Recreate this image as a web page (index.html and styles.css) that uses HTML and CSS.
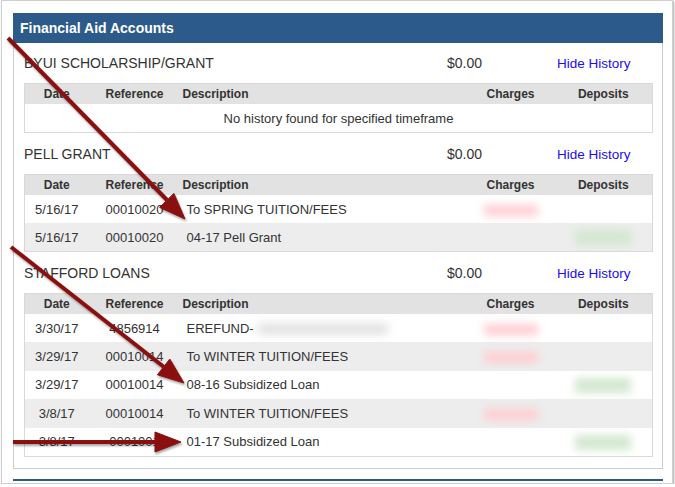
FILE: index.html
```html
<!DOCTYPE html>
<html lang="en">
<head>
  <meta charset="UTF-8">
  <title>Financial Aid Accounts</title>
  <link rel="stylesheet" href="styles.css">
</head>
<body>
  <div class="frame">
    <div class="panel">
      <div class="panel-head">Financial Aid Accounts</div>
      <div class="panel-body">

        <div class="acct">
          <span class="acct-name">BYUI SCHOLARSHIP/GRANT</span>
          <span class="acct-amt">$0.00</span>
          <a class="acct-link" href="#">Hide History</a>
        </div>
        <table class="hist">
          <colgroup>
            <col class="c-date"><col class="c-ref"><col class="c-desc"><col class="c-chg"><col class="c-dep">
          </colgroup>
          <tr><th>Date</th><th>Reference</th><th class="left">Description</th><th>Charges</th><th>Deposits</th></tr>
          <tr><td colspan="5">No history found for specified timeframe</td></tr>
        </table>

        <div class="acct">
          <span class="acct-name">PELL GRANT</span>
          <span class="acct-amt">$0.00</span>
          <a class="acct-link" href="#">Hide History</a>
        </div>
        <table class="hist">
          <colgroup>
            <col class="c-date"><col class="c-ref"><col class="c-desc"><col class="c-chg"><col class="c-dep">
          </colgroup>
          <tr><th>Date</th><th>Reference</th><th class="left">Description</th><th>Charges</th><th>Deposits</th></tr>
          <tr><td>5/16/17</td><td>00010020</td><td class="desc">To SPRING TUITION/FEES</td><td><span class="blob red"></span></td><td></td></tr>
          <tr class="alt"><td>5/16/17</td><td>00010020</td><td class="desc">04-17 Pell Grant</td><td></td><td><span class="blob green"></span></td></tr>
        </table>

        <div class="acct">
          <span class="acct-name">STAFFORD LOANS</span>
          <span class="acct-amt">$0.00</span>
          <a class="acct-link" href="#">Hide History</a>
        </div>
        <table class="hist last">
          <colgroup>
            <col class="c-date"><col class="c-ref"><col class="c-desc"><col class="c-chg"><col class="c-dep">
          </colgroup>
          <tr><th>Date</th><th>Reference</th><th class="left">Description</th><th>Charges</th><th>Deposits</th></tr>
          <tr><td>3/30/17</td><td>4856914</td><td class="desc">EREFUND-<span class="blob grey"></span></td><td><span class="blob red"></span></td><td></td></tr>
          <tr class="alt"><td>3/29/17</td><td>00010014</td><td class="desc">To WINTER TUITION/FEES</td><td><span class="blob red"></span></td><td></td></tr>
          <tr><td>3/29/17</td><td>00010014</td><td class="desc">08-16 Subsidized Loan</td><td></td><td><span class="blob green"></span></td></tr>
          <tr class="alt"><td>3/8/17</td><td>00010014</td><td class="desc">To WINTER TUITION/FEES</td><td><span class="blob red"></span></td><td></td></tr>
          <tr><td>3/8/17</td><td>0001001</td><td class="desc">01-17 Subsidized Loan</td><td></td><td><span class="blob green"></span></td></tr>
        </table>

      </div>
    </div>
    <div class="rule"></div>

    <!-- annotation arrows drawn over the screenshot -->
    <svg class="arrows" width="675" height="487" viewBox="0 0 675 487">
      <g fill="#8a1010" stroke="#8a1010">
        <line x1="8" y1="38" x2="167" y2="200" stroke-width="4"/>
        <polygon points="185,219 159.6,207.4 173.9,193.4" stroke-width="1"/>
        <line x1="11" y1="247" x2="164" y2="367" stroke-width="4"/>
        <polygon points="184,383 157.4,374.8 169.8,359" stroke-width="1"/>
        <line x1="13" y1="442" x2="156" y2="442" stroke-width="4"/>
        <polygon points="181,442 155,432 155,452" stroke-width="1"/>
      </g>
    </svg>
  </div>
</body>
</html>
```

FILE: styles.css
```css
/* Page */
body {
  margin: 0;
  background-color: #fff;
  font-family: "Liberation Sans", Arial, sans-serif;
  color: #333;
}

/* Screenshot frame */
.frame {
  position: relative;
  box-sizing: border-box;
  width: 672px;
  height: 484px;
  margin-left: 1px;
  padding: 12px 0 0 11px;
  border: 1px solid #cfcfcf;
  box-shadow: 1px 1px 2px rgba(0, 0, 0, 0.35);
  background-color: #fff;
}

/* Panel */
.panel {
  width: 650px;
}

.panel-head {
  height: 30px;
  line-height: 30px;
  padding-left: 7px;
  background-color: #2c5a8b;
  color: #fff;
  font-size: 14px;
  font-weight: bold;
}

.panel-body {
  border: 1px solid #cccccc;
  border-top: none;
  padding: 0 10px 11px;
}

.rule {
  width: 650px;
  height: 2px;
  margin-top: 10px;
  background-color: #2c5a8b;
}

/* Account rows */
.acct {
  display: grid;
  grid-template-columns: 423px 110px 95px;
  align-items: center;
  height: 40px;
  font-size: 14px;
}

.acct-link {
  color: #1d0cf2;
  text-decoration: none;
  font-size: 13.5px;
}

/* History tables */
.hist {
  width: 628px;
  margin-bottom: 1px;
  table-layout: fixed;
  border-collapse: collapse;
  border: 1px solid #d9d9d9;
  font-size: 13px;
}

.hist.last {
  margin-bottom: 0;
}

.c-date { width: 64px; }
.c-ref { width: 92px; }
.c-desc { width: 286px; }
.c-chg { width: 88px; }
.c-dep { width: 98px; }

.hist th {
  height: 20px;
  padding: 0;
  background-color: #e2e2e2;
  font-size: 12px;
  font-weight: bold;
  text-align: center;
}

.hist th.left {
  text-align: left;
  padding-left: 2px;
}

.hist td {
  height: 28px;
  padding: 0;
  text-align: center;
  white-space: nowrap;
}

.hist.last td {
  height: 28.4px;
}

.hist td.desc {
  text-align: left;
  padding-left: 6px;
}

.hist tr.alt td {
  background-color: #ededed;
}

/* Redacted amounts */
.blob {
  display: inline-block;
  vertical-align: middle;
  filter: blur(4px);
}

.blob.red {
  width: 54px;
  height: 11px;
  background-color: #ffcdd1;
}

.blob.green {
  width: 56px;
  height: 15px;
  background-color: #d3e8d0;
}

.blob.grey {
  width: 130px;
  height: 10px;
  margin-left: 4px;
  background-color: #dedede;
  filter: blur(5px);
}

/* Arrows overlay */
.arrows {
  position: absolute;
  top: -1px;
  left: -2px;
  pointer-events: none;
  filter: drop-shadow(1px 2px 1px rgba(0, 0, 0, 0.35));
}
```
